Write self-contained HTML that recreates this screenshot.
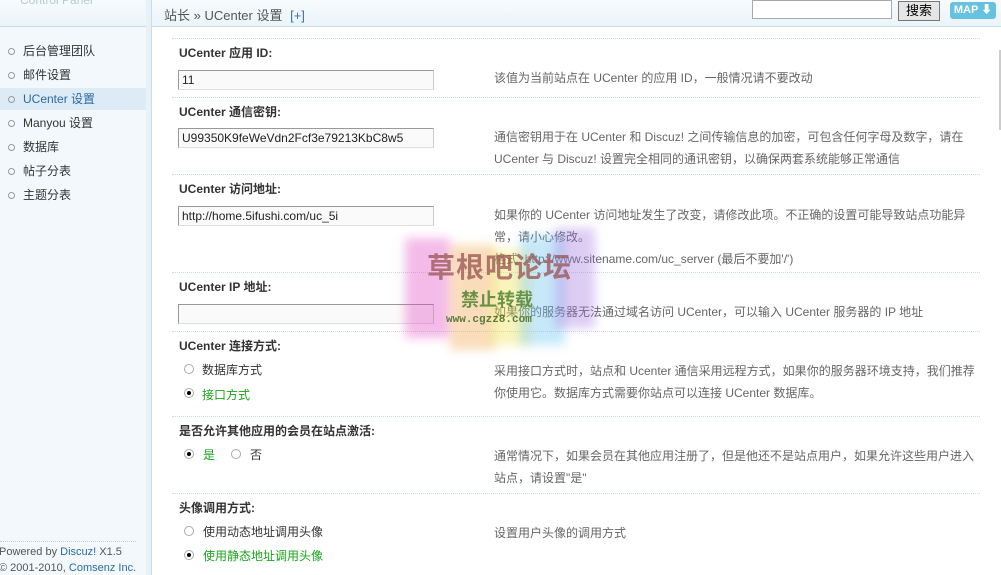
<!DOCTYPE html>
<html><head><meta charset="utf-8"><style>
*{margin:0;padding:0;box-sizing:border-box}
body{width:1001px;height:575px;overflow:hidden;background:#fff;font:12px "Liberation Sans","Noto Sans CJK SC",sans-serif;color:#333;position:relative}
.hdr{position:absolute;left:0;top:0;width:1001px;height:27px;background:linear-gradient(#f7fbfd,#eaf4f9);border-bottom:1px solid #c5dbe5}
.side{position:absolute;left:0;top:27px;width:146px;height:548px;background:#f2f8fc}
.vl{position:absolute;left:146px;top:0;width:6px;height:575px;background:#e6f1f8;border-right:1px solid #c9dde8}
.a{position:absolute;font-size:12px;white-space:nowrap}
.nav{position:absolute;left:0;width:146px;height:22px;line-height:22px;padding-left:23px;color:#333}
.nav:before{content:"";position:absolute;left:8px;top:8px;width:5px;height:5px;border:1px solid #999;border-radius:50%}
.dl{position:absolute;left:172px;width:808px;border-top:1px dotted #cfdbe3}
.lb{position:absolute;left:179px;font-weight:bold;color:#333;font-size:12px}
.in{position:absolute;left:178px;width:256px;height:20px;border:1px solid #999;border-right-color:#ccc;border-bottom-color:#ddd;background:#fafafa;padding:2px 3px;font-size:12px;overflow:hidden;white-space:nowrap;color:#222}
.ds{position:absolute;left:494px;color:#666;line-height:22px;width:484px}
.r{position:absolute;width:10px;height:10px;border:1px solid #aaa;border-radius:50%;background:#fff}
.r.on:after{content:"";position:absolute;left:2px;top:2px;width:4px;height:4px;background:#000;border-radius:50%}
.g{color:#1aa31a}
.wm{position:absolute;filter:blur(5px);opacity:.35}
</style></head><body>
<div class="hdr"></div>
<div class="side"></div>
<div class="vl"></div>
<div class="a" style="left:20px;top:-7px;color:#b8c8d4;font-size:12px">Control Panel</div>
<div class="a" style="left:164px;top:5px;color:#555;font-size:13px">站长 » UCenter 设置 <span style="color:#3b73a6;margin-left:4px">[+]</span></div>
<div style="position:absolute;left:752px;top:0;width:140px;height:19px;border:1px solid #aaa;background:#fff"></div>
<div style="position:absolute;left:898px;top:1px;width:42px;height:20px;border:1px solid #777;background:#e5e5e5;font-size:13px;text-align:center;line-height:18px;color:#000">搜索</div>
<div style="position:absolute;left:950px;top:2px;width:46px;height:17px;border-radius:3px;background:#66c2df;color:#fff;font-weight:bold;font-size:11px;text-align:center;line-height:17px">MAP ⬇</div>

<div class="nav" style="top:40px">后台管理团队</div>
<div class="nav" style="top:64px">邮件设置</div>
<div class="nav" style="top:88px;background:#dcebf5;color:#2c6aa0">UCenter 设置</div>
<div class="nav" style="top:112px">Manyou 设置</div>
<div class="nav" style="top:136px">数据库</div>
<div class="nav" style="top:160px">帖子分表</div>
<div class="nav" style="top:184px">主题分表</div>
<div style="position:absolute;left:0;top:541px;width:136px;border-top:1px dotted #ccc"></div>
<div class="a" style="left:-1px;top:546px;color:#555;font-size:11px">Powered by <span style="color:#2c6aa0">Discuz!</span> X1.5</div>
<div class="a" style="left:-1px;top:562px;color:#555;font-size:11px">© 2001-2010, <span style="color:#2c6aa0">Comsenz Inc.</span></div>
<div style="position:absolute;left:999px;top:50px;width:2px;height:80px;background:#ccc"></div>

<div class="dl" style="top:38px"></div>
<div class="lb" style="top:44px">UCenter 应用 ID:</div>
<div class="in" style="top:70px">11</div>
<div class="ds" style="top:67px">该值为当前站点在 UCenter 的应用 ID，一般情况请不要改动</div>

<div class="dl" style="top:97px"></div>
<div class="lb" style="top:103px">UCenter 通信密钥:</div>
<div class="in" style="top:128px">U99350K9feWeVdn2Fcf3e79213KbC8w5</div>
<div class="ds" style="top:126px">通信密钥用于在 UCenter 和 Discuz! 之间传输信息的加密，可包含任何字母及数字，请在 UCenter 与 Discuz! 设置完全相同的通讯密钥，以确保两套系统能够正常通信</div>

<div class="dl" style="top:174px"></div>
<div class="lb" style="top:180px">UCenter 访问地址:</div>
<div class="in" style="top:206px">http://home.5ifushi.com/uc_5i</div>
<div class="ds" style="top:204px">如果你的 UCenter 访问地址发生了改变，请修改此项。不正确的设置可能导致站点功能异常，请小心修改。<br>格式: http://www.sitename.com/uc_server (最后不要加'/')</div>

<div class="dl" style="top:272px"></div>
<div class="lb" style="top:278px">UCenter IP 地址:</div>
<div class="in" style="top:304px"></div>
<div class="ds" style="top:301px">如果你的服务器无法通过域名访问 UCenter，可以输入 UCenter 服务器的 IP 地址</div>

<div class="dl" style="top:331px"></div>
<div class="lb" style="top:337px">UCenter 连接方式:</div>
<div class="r" style="left:184px;top:364px"></div><div class="a" style="left:202px;top:361px">数据库方式</div>
<div class="r on" style="left:184px;top:388px"></div><div class="a g" style="left:202px;top:386px">接口方式</div>
<div class="ds" style="top:360px">采用接口方式时，站点和 Ucenter 通信采用远程方式，如果你的服务器环境支持，我们推荐你使用它。数据库方式需要你站点可以连接 UCenter 数据库。</div>

<div class="dl" style="top:416px"></div>
<div class="lb" style="top:422px">是否允许其他应用的会员在站点激活:</div>
<div class="r on" style="left:184px;top:449px"></div><div class="a g" style="left:203px;top:446px">是</div>
<div class="r" style="left:231px;top:449px"></div><div class="a" style="left:250px;top:446px">否</div>
<div class="ds" style="top:445px">通常情况下，如果会员在其他应用注册了，但是他还不是站点用户，如果允许这些用户进入站点，请设置"是"</div>

<div class="dl" style="top:493px"></div>
<div class="lb" style="top:499px">头像调用方式:</div>
<div class="r" style="left:184px;top:526px"></div><div class="a" style="left:203px;top:523px">使用动态地址调用头像</div>
<div class="r on" style="left:184px;top:550px"></div><div class="a g" style="left:203px;top:547px">使用静态地址调用头像</div>
<div class="ds" style="top:522px">设置用户头像的调用方式</div>

<div class="wm" style="left:405px;top:238px;width:45px;height:100px;background:#e040c0"></div>
<div class="wm" style="left:450px;top:245px;width:45px;height:105px;background:#f0a040"></div>
<div class="wm" style="left:490px;top:250px;width:40px;height:95px;background:#f0e040"></div>
<div class="wm" style="left:520px;top:235px;width:45px;height:110px;background:#60c0f0"></div>
<div class="wm" style="left:555px;top:228px;width:40px;height:100px;background:#a070e0"></div>
<div class="a" style="left:427px;top:246px;font-size:28px;font-weight:bold;color:#a05a5a;opacity:.8;letter-spacing:1px">草根吧论坛</div>
<div class="a" style="left:461px;top:286px;font-size:18px;font-weight:bold;color:#5a8a3a;opacity:.9">禁止转载</div>
<div class="a" style="left:446px;top:314px;font-size:11px;font-weight:bold;color:#5a7a3a;font-family:'Liberation Mono',monospace">www.cgzz8.com</div>
</body></html>
